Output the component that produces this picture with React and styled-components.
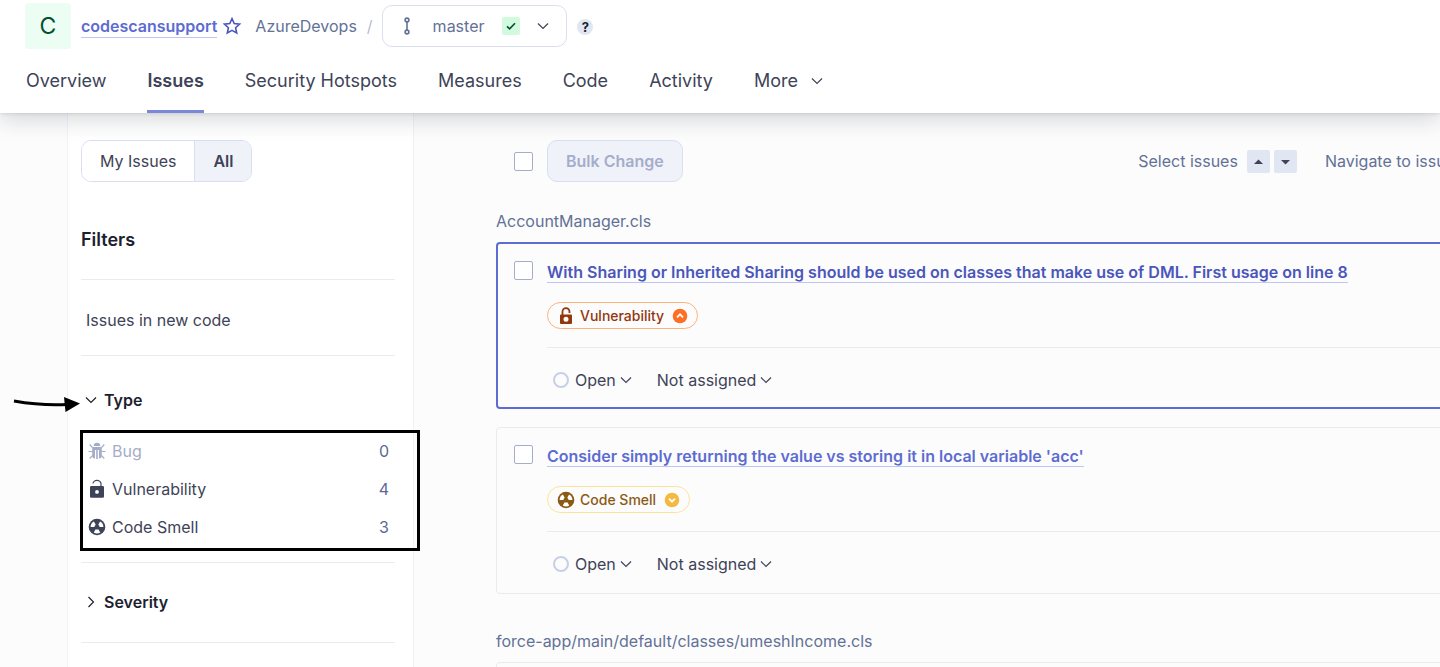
import React from "react";
import styled, { createGlobalStyle } from "styled-components";

const GlobalStyle = createGlobalStyle`
  * { box-sizing: border-box; }
  body {
    margin: 0;
    background: #fcfcfd;
    color: #3e4357;
    font-family: Inter, "Liberation Sans", sans-serif;
    font-size: 16px;
    line-height: 24px;
    overflow: hidden;
  }
  button, input { font: inherit; color: inherit; margin: 0; }
  button { cursor: pointer; }
  svg { display: block; flex: none; }
`;

const Page = styled.div`
  height: 100vh;
  display: flex;
  flex-direction: column;
  overflow: hidden;
`;

const Header = styled.header`
  position: relative;
  z-index: 1;
  flex: none;
  background: #fff;
  padding: 3px 25px 0;
  box-shadow: 0 6px 22px rgba(29, 33, 47, 0.18), 0 1px 3px rgba(29, 33, 47, 0.1);
`;

const Breadcrumb = styled.div`
  display: flex;
  align-items: center;
  height: 46px;
`;

const Avatar = styled.div`
  width: 46px;
  height: 46px;
  margin-right: 10px;
  border-radius: 4px;
  background: #ecfdf3;
  color: #054f31;
  font-size: 23px;
  line-height: 46px;
  text-align: center;
`;

const OrgLink = styled.a`
  color: #5d6cd0;
  font-weight: 600;
  text-decoration: none;
  border-bottom: 1px solid #bdc6f6;
  line-height: 22px;
  margin-right: 5px;
`;

const IconButton = styled.button`
  display: flex;
  padding: 0;
  border: 0;
  background: none;
  color: ${(p) => p.$color || "inherit"};
`;

const Crumb = styled.a`
  margin-left: 13px;
  color: #637196;
  text-decoration: none;
`;

const Slash = styled.span`
  margin: 0 9px 0 10px;
  color: #b9bdc9;
`;

const BranchButton = styled.button`
  display: flex;
  align-items: center;
  height: 42px;
  padding: 0 17px 0 15px;
  border: 1px solid #d9dfee;
  border-radius: 10px;
  background: #fff;
  color: #637196;
`;

const BranchName = styled.span`
  margin: 0 18px 0 17px;
`;

const Gate = styled.span`
  display: flex;
  align-items: center;
  justify-content: center;
  width: 18px;
  height: 18px;
  margin-right: 17px;
  border-radius: 2px;
  background: #d1fadf;
  color: #054f31;
`;

const BranchCaret = styled.span`
  color: #3e4357;
`;

const Help = styled.button`
  width: 16px;
  height: 16px;
  margin: 2px 0 0 10px;
  padding: 0;
  border: 0;
  border-radius: 50%;
  background: #e1e6f3;
  color: #1d212f;
  font-size: 13px;
  font-weight: 700;
  line-height: 16px;
`;

const Tabs = styled.nav`
  display: flex;
  gap: 41px;
  padding: 0 1px;
  font-size: 18px;
`;

const Tab = styled.a`
  display: flex;
  align-items: center;
  height: 64px;
  padding: 3px 0 0;
  border: solid ${(p) => (p.$active ? "#7b87d9" : "transparent")};
  border-width: 0 0 3px;
  background: none;
  font-weight: ${(p) => (p.$active ? 600 : 400)};
  color: inherit;
  text-decoration: none;
`;

const MoreTab = styled(Tab).attrs({ as: "button" })`
  gap: 13px;
`;

const Body = styled.div`
  flex: 1;
  min-height: 0;
  display: flex;
`;

const Sidebar = styled.aside`
  flex: none;
  width: 347px;
  margin-left: 67px;
  padding: 27px 18px 0 13px;
  border: solid #eff2f9;
  border-width: 0 1px;
  background: #fff;
`;

const Toggle = styled.div`
  display: flex;
  width: fit-content;
  border: 1px solid #d9dfee;
  border-radius: 10px;
  overflow: hidden;
`;

const ToggleButton = styled.button`
  height: 40px;
  padding: 0 18px;
  border: 0;
  background: ${(p) => (p.$active ? "#eff2f9" : "#fff")};
  font-weight: ${(p) => (p.$active ? 600 : 400)};
  & + & { border-left: 1px solid #d9dfee; }
`;

const FiltersTitle = styled.h2`
  margin: 46px 0 27px;
  font-size: 18px;
  font-weight: 600;
  line-height: 24px;
  color: #1d212f;
`;

const Section = styled.section`
  border-top: 1px solid #ebebeb;
  padding: ${(p) => (p.$open ? "32px 0 23px" : p.$compact ? "28px 0 23px" : "27px 0 28px")};
`;

const PlainFilter = styled.button`
  display: block;
  height: 24px;
  padding: 0 5px;
  border: 0;
  background: none;
`;

const FacetHeader = styled.button`
  display: flex;
  align-items: center;
  gap: 7px;
  height: 24px;
  padding: 0 4px;
  border: 0;
  background: none;
  color: #1d212f;
  font-weight: 600;
`;

const FacetList = styled.ul`
  position: relative;
  display: flex;
  flex-direction: column;
  gap: 14px;
  margin: 27px 0 0;
  padding: 0 6px 0 7px;
  list-style: none;
`;

const FacetItem = styled.button`
  display: flex;
  align-items: center;
  gap: 6px;
  width: 100%;
  height: 24px;
  padding: 0;
  border: 0;
  background: none;
  color: ${(p) => (p.disabled ? "#a6adc6" : "#3e4357")};
`;

const Count = styled.span`
  margin-left: auto;
  color: #5a6a96;
`;

const Highlight = styled.div`
  position: absolute;
  inset: -9px -25px -12px -1px;
  border: 3px solid #000;
  pointer-events: none;
`;

const PointerArrow = styled.svg`
  position: absolute;
  right: 100%;
  top: -45px;
`;

const Main = styled.main`
  flex: 1;
  min-width: 0;
  overflow: hidden;
  padding: 27px 0 0 82px;
`;

const Wide = styled.div`
  margin-right: -74px;
`;

const Toolbar = styled.div`
  display: flex;
  align-items: center;
  gap: 14px;
  padding-left: 18px;
  white-space: nowrap;
`;

const Checkbox = styled.input.attrs({ type: "checkbox" })`
  appearance: none;
  flex: none;
  width: 19px;
  height: 19px;
  border: 1px solid #a6adcb;
  border-radius: 2px;
  background: #fff;
`;

const BulkButton = styled.button`
  height: 42px;
  padding: 0 18px;
  border: 1px solid #d9dfee;
  border-radius: 10px;
  background: #eff2f9;
  color: #a6adcb;
  font-weight: 600;
`;

const Hint = styled.div`
  display: flex;
  align-items: center;
  gap: 4px;
  margin-left: ${(p) => (p.$push ? "auto" : "14px")};
  color: #637196;
`;

const HintLabel = styled.span`
  margin-right: 5px;
`;

const Key = styled.button`
  display: flex;
  align-items: center;
  justify-content: center;
  width: 23px;
  height: 23px;
  padding: 0;
  border: 0;
  border-radius: 2px;
  background: #e1e6f3;
  color: #3e4357;
`;

const FileName = styled.h3`
  margin: ${(p) => (p.$first ? 27 : 35)}px 0 9px;
  font-size: 16px;
  font-weight: 400;
  line-height: 24px;
  color: #637196;
`;

const Card = styled.article`
  display: flex;
  gap: 14px;
  height: 167px;
  margin-bottom: 18px;
  padding: ${(p) => (p.$selected ? "17px 16px" : "17px")};
  border: ${(p) => (p.$selected ? "2px solid #5d6cd0" : "1px solid #ebebeb")};
  border-radius: 4px;
`;

const CardBody = styled.div`
  flex: 1;
  min-width: 0;
`;

const IssueLink = styled.a`
  display: block;
  width: fit-content;
  margin-top: 1px;
  border-bottom: 1px solid #bdc6f6;
  color: ${(p) => (p.$selected ? "#4b56bb" : "#5d6cd0")};
  font-weight: 600;
  line-height: 20px;
  text-decoration: none;
  white-space: nowrap;
`;

const Pill = styled.div`
  display: flex;
  align-items: center;
  gap: 5px;
  width: fit-content;
  height: 27px;
  margin: 19px 0 18px;
  padding: 0 9px;
  border: 1px solid ${(p) => p.$border};
  border-radius: 14px;
  color: ${(p) => p.$color};
  font-size: 14px;
  font-weight: 500;
`;

const SeverityDot = styled.span`
  display: flex;
  margin-left: 3px;
`;

const Actions = styled.div`
  display: flex;
  gap: 25px;
  padding: 20px 6px 0;
  border-top: 1px solid #ebebeb;
`;

const ActionButton = styled.button`
  display: flex;
  align-items: center;
  gap: 4px;
  height: 24px;
  padding: 0;
  border: 0;
  background: none;
`;

const StatusCircle = styled.span`
  width: 16px;
  height: 16px;
  margin-right: 2px;
  border: 2px solid #c8d0e4;
  border-radius: 50%;
`;

const Chevron = ({ right }) => (
  <svg width="12" height="12" viewBox="0 0 12 12" fill="none" stroke="currentColor" strokeWidth="1.2">
    <path d={right ? "M3.5 1 8.5 6l-5 5" : "M1 3.5 6 8.5l5-5"} />
  </svg>
);

const StarIcon = () => (
  <svg width="20" height="20" viewBox="0 0 20 20" fill="none" stroke="currentColor" strokeWidth="1.6" strokeLinejoin="miter">
    <path d="M10 2.600 12.200 7.500 17.600 8.100 13.600 11.700 14.700 17 10 14.300 5.300 17 6.400 11.700 2.400 8.100 7.800 7.500Z" />
  </svg>
);

const BranchIcon = () => (
  <svg width="18" height="18" viewBox="0 0 18 18" fill="none" stroke="currentColor" strokeWidth="1.6">
    <circle cx="9" cy="3" r="1.9" />
    <circle cx="9" cy="15" r="1.9" />
    <path d="M9 5v8" />
  </svg>
);

const CheckIcon = () => (
  <svg width="12" height="12" viewBox="0 0 12 12" fill="none" stroke="currentColor" strokeWidth="1.6">
    <path d="m2 6.300 2.600 2.500L10 3.200" />
  </svg>
);

const BugIcon = () => (
  <svg width="18" height="18" viewBox="0 0 18 18" fill="currentColor">
    <path d="M5.700 4a3.300 3.300 0 0 1 6.600 0z" />
    <path d="M4.200 5h9.600v8.500a3 3 0 0 1-2.800 3V8H7v8.500a3 3 0 0 1-2.800-3z" />
    <path d="M8.200 8h1.600v9H8.200z" />
    <path d="M1.700 2.500 4.500 5.700M16.300 2.500l-2.800 3.200M.5 9.500h4M17.500 9.500h-4M1.700 16.500l3-3.200M16.300 16.500l-3-3.200" fill="none" stroke="currentColor" strokeWidth="1.200" />
  </svg>
);

const LockIcon = () => (
  <svg width="18" height="20" viewBox="0 0 18 20" fill="none">
    <path d="M5 4.500a4 3.300 0 0 1 8 .5v3" stroke="currentColor" strokeWidth="1.200" />
    <path fill="currentColor" fillRule="evenodd" d="M3.300 7h11.400a1.300 1.300 0 0 1 1.300 1.300v9.200a1.300 1.300 0 0 1-1.300 1.300H3.300A1.300 1.300 0 0 1 2 17.500V8.300A1.300 1.300 0 0 1 3.300 7zM9 11a1.900 1.900 0 1 0 0 3.800A1.900 1.900 0 0 0 9 11z" />
  </svg>
);

const BoldLockIcon = () => (
  <svg width="18" height="18" viewBox="0 0 18 18" fill="none">
    <path d="M5.500 8V4.700a3.500 3.500 0 0 1 7 0v1.300" stroke="currentColor" strokeWidth="1.800" />
    <path fill="currentColor" fillRule="evenodd" d="M4 7.500h10a1 1 0 0 1 1 1v7.500a1 1 0 0 1-1 1H4a1 1 0 0 1-1-1v-7.500a1 1 0 0 1 1-1zm5 2.200a2.500 2.500 0 1 0 0 5 2.500 2.500 0 0 0 0-5z" />
  </svg>
);

const SmellIcon = () => (
  <svg width="18" height="18" viewBox="0 0 18 18">
    <circle cx="9" cy="9" r="8.300" fill="currentColor" />
    {[60, 180, 300].map((a) => (
      <path key={a} transform={`rotate(${a} 9 9)`} d="M7.700 6.800 5.700 3.500a6.400 6.400 0 0 1 6.600 0L10.300 6.800a2.600 2.600 0 0 0-2.600 0z" fill="#fff" />
    ))}
  </svg>
);

const SeverityIcon = ({ down }) => (
  <svg width="16" height="16" viewBox="0 0 16 16">
    <circle cx="8" cy="8" r="7.300" fill={down ? "#f5b840" : "#fd6f24"} />
    <path d={down ? "m5 6.700 3 3 3-3" : "m5 9.300 3-3 3 3"} fill="none" stroke="#fff" strokeWidth="1.700" />
  </svg>
);

const Triangle = ({ d }) => (
  <svg width="11" height="11" viewBox="0 0 11 11" fill="currentColor">
    <path d={d} />
  </svg>
);

const pills = {
  vulnerability: { label: "Vulnerability", border: "#fdb27a", color: "#93370d", Icon: BoldLockIcon },
  smell: { label: "Code Smell", border: "#fce39a", color: "#8a5a14", Icon: SmellIcon, down: true },
};

const Issue = ({ title, type, selected }) => {
  const { label, border, color, Icon, down } = pills[type];
  return (
    <Card $selected={selected}>
      <Checkbox aria-label={title} />
      <CardBody>
        <IssueLink href="#" $selected={selected}>{title}</IssueLink>
        <Pill $border={border} $color={color}>
          <Icon />
          {label}
          <SeverityDot><SeverityIcon down={down} /></SeverityDot>
        </Pill>
        <Actions>
          <ActionButton><StatusCircle />Open<Chevron /></ActionButton>
          <ActionButton>Not assigned<Chevron /></ActionButton>
        </Actions>
      </CardBody>
    </Card>
  );
};

const types = [
  { label: "Bug", count: 0, Icon: BugIcon },
  { label: "Vulnerability", count: 4, Icon: LockIcon },
  { label: "Code Smell", count: 3, Icon: SmellIcon },
];

export default function App() {
  return (
    <Page>
      <GlobalStyle />
      <Header>
        <Breadcrumb>
          <Avatar>C</Avatar>
          <OrgLink href="#">codescansupport</OrgLink>
          <IconButton $color="#4b56bb" aria-label="Favorite"><StarIcon /></IconButton>
          <Crumb href="#">AzureDevops</Crumb>
          <Slash>/</Slash>
          <BranchButton>
            <BranchIcon />
            <BranchName>master</BranchName>
            <Gate><CheckIcon /></Gate>
            <BranchCaret><Chevron /></BranchCaret>
          </BranchButton>
          <Help>?</Help>
        </Breadcrumb>
        <Tabs>
          <Tab href="#">Overview</Tab>
          <Tab href="#" $active>Issues</Tab>
          <Tab href="#">Security Hotspots</Tab>
          <Tab href="#">Measures</Tab>
          <Tab href="#">Code</Tab>
          <Tab href="#">Activity</Tab>
          <MoreTab>More<Chevron /></MoreTab>
        </Tabs>
      </Header>
      <Body>
        <Sidebar>
          <Toggle>
            <ToggleButton>My Issues</ToggleButton>
            <ToggleButton $active>All</ToggleButton>
          </Toggle>
          <FiltersTitle>Filters</FiltersTitle>
          <Section $compact>
            <PlainFilter>Issues in new code</PlainFilter>
          </Section>
          <Section $open>
            <FacetHeader><Chevron />Type</FacetHeader>
            <FacetList>
              {types.map(({ label, count, Icon }) => (
                <li key={label}>
                  <FacetItem disabled={count === 0}>
                    <Icon />
                    {label}
                    <Count>{count}</Count>
                  </FacetItem>
                </li>
              ))}
              <Highlight />
              <PointerArrow width="68" height="22" viewBox="0 0 68 22">
                <path d="M1 7c17 3 34 4.500 53 3.500" fill="none" stroke="#000" strokeWidth="3" />
                <path d="M51 3l16 6.500L52.500 18z" />
              </PointerArrow>
            </FacetList>
          </Section>
          <Section>
            <FacetHeader><Chevron right />Severity</FacetHeader>
          </Section>
          <Section />
        </Sidebar>
        <Main>
          <Wide>
            <Toolbar>
              <Checkbox aria-label="Select all issues" />
              <BulkButton disabled>Bulk Change</BulkButton>
              <Hint $push>
                <HintLabel>Select issues</HintLabel>
                <Key aria-label="Previous issue"><Triangle d="M1 8 5.500 3.500 10 8z" /></Key>
                <Key aria-label="Next issue"><Triangle d="M1 4l4.500 4.500L10 4z" /></Key>
              </Hint>
              <Hint>
                <HintLabel>Navigate to issue</HintLabel>
                <Key aria-label="Back to list"><Triangle d="M7.500 1 3 5.500 7.500 10z" /></Key>
                <Key aria-label="Open issue"><Triangle d="M3.500 1 8 5.500 3.500 10z" /></Key>
              </Hint>
            </Toolbar>
            <FileName $first>AccountManager.cls</FileName>
            <Issue
              selected
              type="vulnerability"
              title="With Sharing or Inherited Sharing should be used on classes that make use of DML. First usage on line 8"
            />
            <Issue type="smell" title="Consider simply returning the value vs storing it in local variable 'acc'" />
            <FileName>force-app/main/default/classes/umeshIncome.cls</FileName>
            <Card />
          </Wide>
        </Main>
      </Body>
    </Page>
  );
}
